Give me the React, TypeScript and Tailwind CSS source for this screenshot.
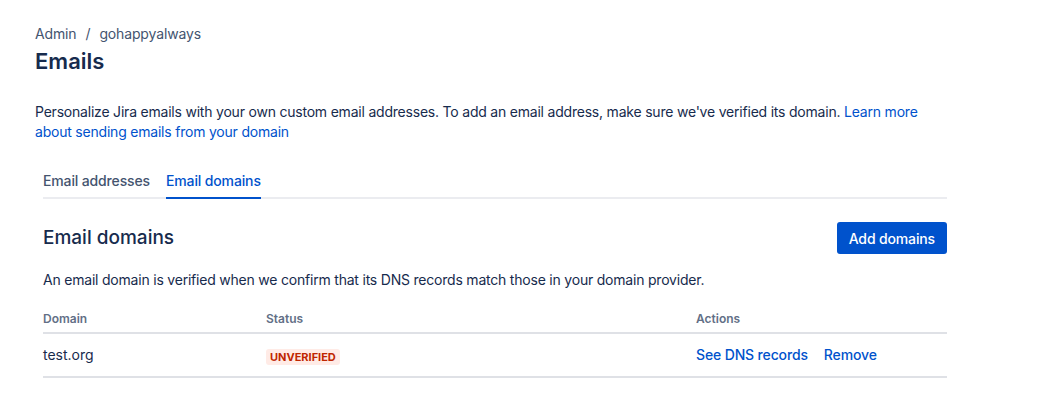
import React from 'react';

const tabs = ['Email addresses', 'Email domains'];

const domains = [{ name: 'test.org', status: 'UNVERIFIED' }];

const App: React.FC = () => {
  return (
    <div className="min-h-screen bg-white font-['Inter',sans-serif] text-[#172B4D]">
      <div className="pl-[35px] pt-[24px] w-[955px]">
        <div className="flex items-center text-[14px] leading-[20px] text-[#44546F] tracking-[-0.01em]">
          <span>Admin</span>
          <span className="mx-[9px]">/</span>
          <span>gohappyalways</span>
        </div>
        <h1 className="mt-[3px] text-[22px] leading-[28px] font-semibold text-[#172B4D]">Emails</h1>

        <p className="mt-[27px] text-[14px] leading-[20px] text-[#172B4D] tracking-[-0.015em]">
          Personalize Jira emails with your own custom email addresses. To add an email address, make sure we've
          verified its domain.{' '}
          <a className="text-[#0052CC]">Learn more about sending emails from your domain</a>
        </p>

        <div className="px-[8px] mt-[19px]">
          {/* Tabs */}
          <div className="flex gap-[16px] border-b-2 border-[#EBECF0] h-[38px] items-end">
            {tabs.map((tab, index) => (
              <div
                key={tab}
                className={
                  index === 1
                    ? 'pb-[6px] -mb-[2px] border-b-2 border-[#0052CC] text-[14px] leading-[20px] font-medium tracking-[-0.01em] text-[#0052CC]'
                    : 'pb-[6px] -mb-[2px] border-b-2 border-transparent text-[14px] leading-[20px] font-medium tracking-[-0.01em] text-[#44546F]'
                }
              >
                {tab}
              </div>
            ))}
          </div>

          <div className="mt-[23px] flex items-center justify-between">
            <h2 className="text-[19px] leading-[24px] font-medium text-[#172B4D]">Email domains</h2>
            <button className="h-[32px] px-[12px] rounded-[3px] bg-[#0052CC] text-white text-[14px] font-medium tracking-[-0.01em]">
              Add domains
            </button>
          </div>

          <p className="mt-[16px] text-[14px] leading-[20px] text-[#172B4D] tracking-[-0.015em]">
            An email domain is verified when we confirm that its DNS records match those in your domain provider.
          </p>

          {/* Table */}
          <table className="mt-[17px] w-full border-collapse">
            <thead>
              <tr className="border-b-2 border-[#DFE1E6] text-left text-[12px] leading-[16px] font-semibold text-[#626F86]">
                <th className="w-[223px] pb-[5px] pt-[4px] font-semibold">Domain</th>
                <th className="w-[430px] pb-[5px] pt-[4px] font-semibold">Status</th>
                <th className="pb-[5px] pt-[4px] font-semibold">Actions</th>
              </tr>
            </thead>
            <tbody>
              {domains.map((domain) => (
                <tr key={domain.name} className="border-b-2 border-[#DFE1E6] h-[44px]">
                  <td className="text-[14px] leading-[20px] text-[#172B4D]">{domain.name}</td>
                  <td>
                    <span className="inline-block rounded-[3px] bg-[#FFEBE6] px-[4px] text-[11px] leading-[16px] font-bold text-[#BF2600]">
                      {domain.status}
                    </span>
                  </td>
                  <td>
                    <div className="flex gap-[16px] text-[14px] leading-[20px] font-medium tracking-[-0.01em] text-[#0052CC]">
                      <a>See DNS records</a>
                      <a>Remove</a>
                    </div>
                  </td>
                </tr>
              ))}
            </tbody>
          </table>
        </div>
      </div>
    </div>
  );
};

export default App;
